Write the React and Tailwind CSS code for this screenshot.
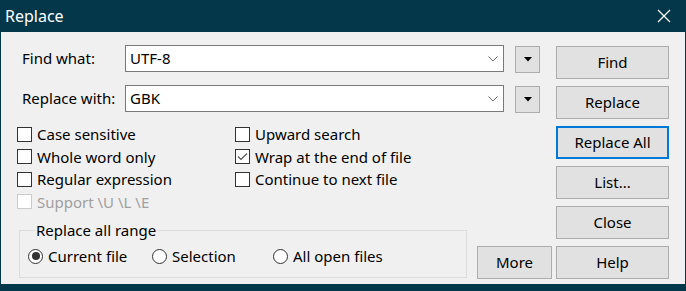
import React from 'react';

const font = { fontFamily: '"Noto Sans", "Open Sans", sans-serif' };

function Check({ label, checked, disabled }){
  return (
    <div className="flex items-center h-[22.5px]">
      <span className={'w-[15px] h-[15px] border bg-white flex items-center justify-center ' + (disabled ? 'border-[#cccccc]' : 'border-[#333333]')}>
        {checked && (
          <svg width="11" height="9" viewBox="0 0 11 9">
            <polyline points="1,4.5 4,7.5 10,1.5" fill="none" stroke="#555555" strokeWidth="1.2" />
          </svg>
        )}
      </span>
      <span className={'ml-[5px] ' + (disabled ? 'text-[#a0a0a0]' : 'text-black')}>{label}</span>
    </div>
  );
}

function Radio({ label, checked, className }){
  return (
    <div className={'flex items-center ' + (className || '')}>
      <span className="w-[15px] h-[15px] rounded-full border border-[#333333] bg-white flex items-center justify-center">
        {checked && <span className="w-[8px] h-[8px] rounded-full bg-[#333333]"></span>}
      </span>
      <span className="ml-[5px]">{label}</span>
    </div>
  );
}

function Combo({ value }){
  return (
    <div className="flex items-center">
      <div className="w-[379px] h-[27px] border border-[#7a7a7a] bg-white flex items-center justify-between pl-[4px] pr-[5px]">
        <span>{value}</span>
        <svg width="10" height="6" viewBox="0 0 10 6">
          <polyline points="0.5,0.5 5,5 9.5,0.5" fill="none" stroke="#6e6e6e" strokeWidth="1" />
        </svg>
      </div>
      <div className="ml-[11px] mt-px w-[25px] h-[27px] border border-[#adadad] bg-[#e1e1e1] flex items-center justify-center">
        <svg width="8" height="5" viewBox="0 0 8 5">
          <polygon points="0,0 8,0 4,4.5" fill="#000000" />
        </svg>
      </div>
    </div>
  );
}

function Btn({ children, focus, className }){
  return (
    <div className={'h-[33px] shrink-0 bg-[#e1e1e1] flex items-center justify-center ' + (focus ? 'border-2 border-[#0078d7]' : 'border border-[#adadad]') + ' ' + (className || 'w-[113px]')}>
      {children}
    </div>
  );
}

export default function App(){
  return (
    <div className="w-[686px] h-[291px] bg-[#04374a] flex flex-col text-[15px] text-black" style={font}>
      <div className="h-[32px] flex items-center justify-between pl-[5px] pr-[15px] text-white text-[16px]">
        <span>Replace</span>
        <svg width="14" height="14" viewBox="0 0 14 14">
          <path d="M1 1 L13 13 M13 1 L1 13" stroke="#ffffff" strokeWidth="1.2" fill="none" />
        </svg>
      </div>
      <div className="mx-px h-[252px] bg-[#f0f0f0] flex">
        <div className="w-[554px] shrink-0 flex flex-col">
          <div className="flex items-center mt-[13px] h-[27px]">
            <span className="pl-[21px] w-[124px]">Find what:</span>
            <Combo value="UTF-8" />
          </div>
          <div className="flex items-center mt-[13px] h-[27px]">
            <span className="pl-[21px] w-[124px]">Replace with:</span>
            <Combo value="GBK" />
          </div>
          <div className="grid grid-cols-[218px_1fr] mt-[11px] pl-[16px]">
            <Check label="Case sensitive" />
            <Check label="Upward search" />
            <Check label="Whole word only" />
            <Check label="Wrap at the end of file" checked />
            <Check label="Regular expression" />
            <Check label="Continue to next file" />
            <Check label="Support \U \L \E" disabled />
          </div>
          <div className="flex-1 flex items-end pb-[5px]">
            <fieldset className="ml-[18px] mb-px w-[448px] h-[58px] shrink-0 border border-[#dcdcdc] pl-[8px]">
              <legend className="px-px ml-[7px] leading-[20px]">Replace all range</legend>
              <div className="flex items-center mt-[5px]">
                <Radio label="Current file" checked className="w-[124px]" />
                <Radio label="Selection" className="w-[121px]" />
                <Radio label="All open files" />
              </div>
            </fieldset>
            <Btn className="ml-[10px] w-[75px]">More</Btn>
          </div>
        </div>
        <div className="ml-px mt-[14px] flex flex-col gap-[7px]">
          <Btn>Find</Btn>
          <Btn>Replace</Btn>
          <Btn focus>Replace All</Btn>
          <Btn>List...</Btn>
          <Btn>Close</Btn>
          <Btn>Help</Btn>
        </div>
      </div>
    </div>
  );
}
